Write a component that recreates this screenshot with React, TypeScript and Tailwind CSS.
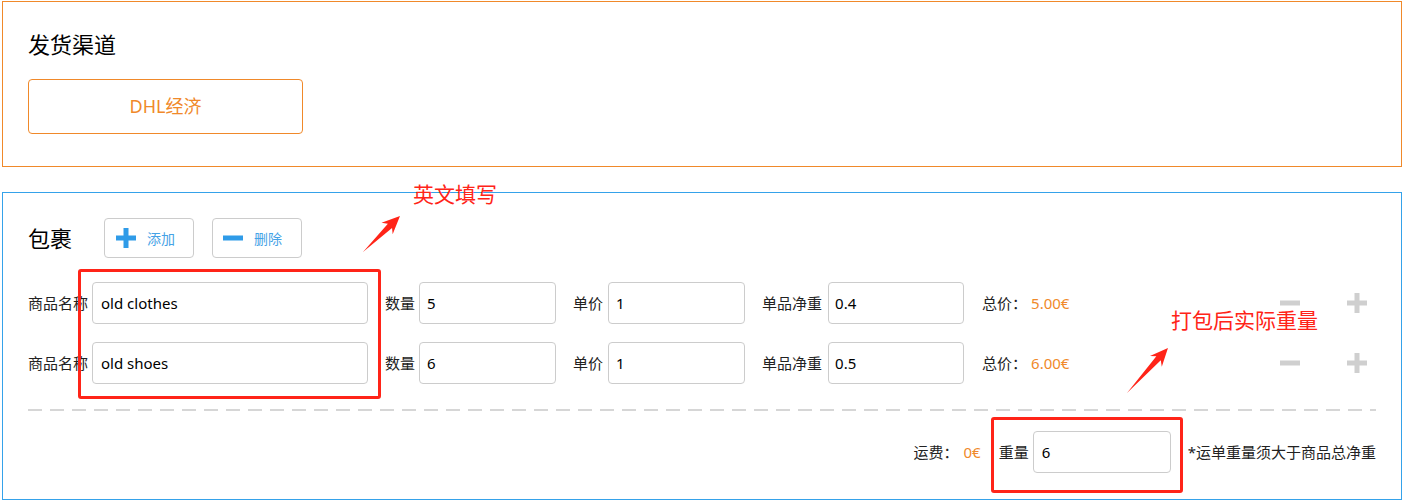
import React from "react";

const ITEMS = [
  { name: "old clothes", qty: "5", price: "1", weight: "0.4", total: "5.00€" },
  { name: "old shoes", qty: "6", price: "1", weight: "0.5", total: "6.00€" },
];

function PlusIcon({ className }: { className: string }) {
  return (
    <svg viewBox="0 0 20 20" className={className}>
      <path d="M7.5 0h5v7.5H20v5h-7.5V20h-5v-7.5H0v-5h7.5z" fill="currentColor" />
    </svg>
  );
}

function MinusIcon({ className }: { className: string }) {
  return (
    <svg viewBox="0 0 20 20" className={className}>
      <rect x="0" y="7.5" width="20" height="5" fill="currentColor" />
    </svg>
  );
}

// arrow pointing +x, tail at 0,0
function Arrow({ x, y, len, angle }: { x: number; y: number; len: number; angle: number }) {
  const L = len;
  const pts = `0,0 ${L - 14},-3 ${L - 18},-8 ${L},0 ${L - 18},8 ${L - 14},3`;
  return (
    <g transform={`translate(${x} ${y}) rotate(${angle})`}>
      <polygon points={pts} fill="#ff2418" />
    </g>
  );
}

export default function App() {
  return (
    <div className="relative w-[1403px] h-[502px] bg-white font-['Noto_Sans','Noto_Sans_CJK_SC',sans-serif] text-[#222]">
      {/* 发货渠道 */}
      <section className="ml-[2px] mt-[1px] w-[1400px] border border-[#f0892a] px-[25px] pt-[27px] pb-[32px]">
        <h2 className="text-[22px] leading-[30px] text-black">发货渠道</h2>
        <button className="mt-[20px] flex h-[55px] w-[275px] items-center justify-center rounded-[4px] border border-[#f0892a] text-[18px] text-[#f0892a]">
          DHL经济
        </button>
      </section>

      {/* 包裹 */}
      <section className="ml-[2px] mt-[25px] w-[1400px] border border-[#35a2ea] pl-[25px] pr-[25px] pt-[25px] pb-[26px]">
        <div className="flex h-[40px] items-center">
          <h2 className="w-[76px] text-[22px] leading-[30px] text-black">包裹</h2>
          <button className="flex h-[40px] w-[90px] items-center rounded-[4px] border border-[#ccc] pl-[11px]">
            <PlusIcon className="h-5 w-5 text-[#2f9be8]" />
            <span className="ml-[11px] text-[14px] text-[#45a2e6]">添加</span>
          </button>
          <button className="ml-[18px] flex h-[40px] w-[90px] items-center rounded-[4px] border border-[#ccc] pl-[10px]">
            <MinusIcon className="h-5 w-5 text-[#2f9be8]" />
            <span className="ml-[11px] text-[14px] text-[#45a2e6]">删除</span>
          </button>
        </div>

        <div className="mt-[24px] flex flex-col gap-[18px]">
          {ITEMS.map((it) => (
            <div key={it.name} className="flex h-[42px] items-center text-[15px]">
              <span className="mr-[4px]">商品名称</span>
              <input
                readOnly
                value={it.name}
                className="h-[42px] w-[276px] rounded-[4px] border border-[#ccc] px-[8px] text-black outline-none"
              />
              <span className="ml-[17px] mr-[4px]">数量</span>
              <input
                readOnly
                value={it.qty}
                className="h-[42px] w-[137px] rounded-[4px] border border-[#ccc] px-[7px] text-black outline-none"
              />
              <span className="ml-[17px] mr-[5px]">单价</span>
              <input
                readOnly
                value={it.price}
                className="h-[42px] w-[137px] rounded-[4px] border border-[#ccc] px-[7px] text-black outline-none"
              />
              <span className="ml-[17px] mr-[6px]">单品净重</span>
              <input
                readOnly
                value={it.weight}
                className="h-[42px] w-[136px] rounded-[4px] border border-[#ccc] px-[6px] text-black outline-none"
              />
              <span className="ml-[18px]">总价：</span>
              <span className="ml-[4px] text-[#f0892a]">{it.total}</span>
              <div className="flex-1" />
              <MinusIcon className="h-5 w-5 text-[#cfcfcf]" />
              <PlusIcon className="ml-[47px] mr-[9px] h-5 w-5 text-[#cfcfcf]" />
            </div>
          ))}
        </div>

        <div className="mt-[25px] h-[2px] bg-[repeating-linear-gradient(to_right,#d6d6d6_0_14px,transparent_14px_22px)]" />

        <div className="mt-[20px] flex h-[42px] items-center justify-end text-[15px]">
          <span>运费：</span>
          <span className="ml-[5px] text-[#f0892a]">0€</span>
          <span className="ml-[18px] mr-[4px]">重量</span>
          <input
            readOnly
            value="6"
            className="h-[42px] w-[138px] rounded-[4px] border border-[#ccc] px-[8px] text-black outline-none"
          />
          <span className="ml-[17px]">*运单重量须大于商品总净重</span>
        </div>
      </section>

      {/* annotations */}
      <div className="absolute left-[413px] top-[183px] text-[21px] leading-none text-[#ff2418]">英文填写</div>
      <div className="absolute left-[1171px] top-[309px] text-[21px] leading-none text-[#ff2418]">打包后实际重量</div>
      <div className="absolute left-[78px] top-[268px] h-[130px] w-[303px] rounded-[3px] border-[3px] border-[#ff2418]" />
      <div className="absolute left-[991px] top-[416px] h-[76px] w-[192px] rounded-[3px] border-[3px] border-[#ff2418]" />
      <svg className="pointer-events-none absolute left-0 top-0" width="1403" height="502">
        <Arrow x={363} y={251} len={51.6} angle={-44.2} />
        <Arrow x={1127} y={392} len={60.9} angle={-47.7} />
      </svg>
    </div>
  );
}
